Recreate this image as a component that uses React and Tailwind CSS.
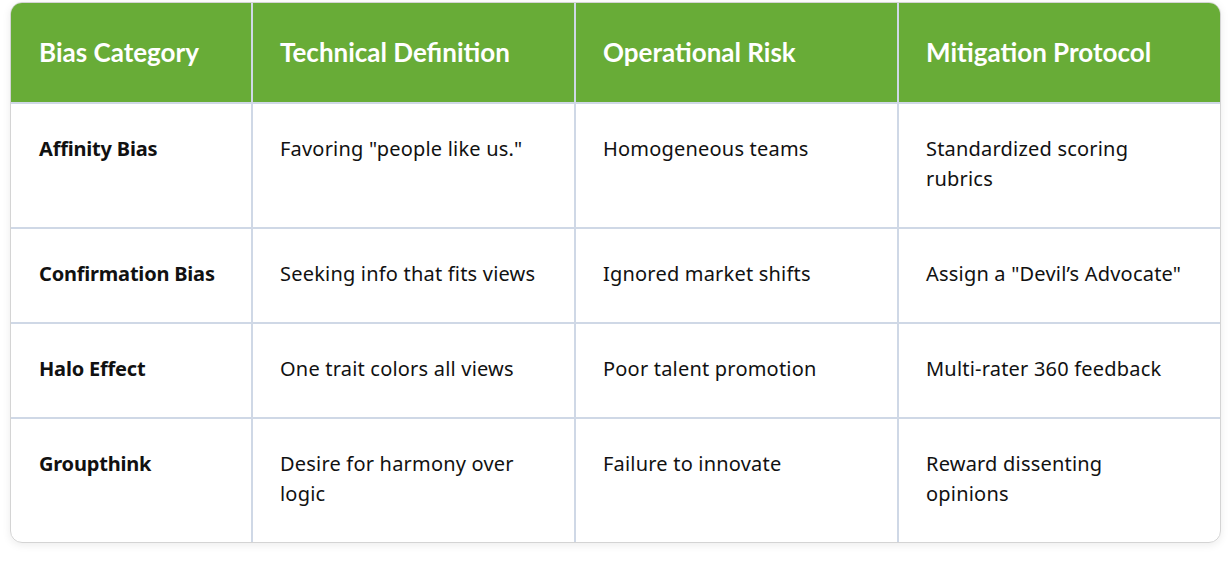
export default function App() {
  const rows = [
    ["Affinity Bias", 'Favoring "people like us."', "Homogeneous teams", "Standardized scoring rubrics"],
    ["Confirmation Bias", "Seeking info that fits views", "Ignored market shifts", 'Assign a "Devil\u2019s Advocate"'],
    ["Halo Effect", "One trait colors all views", "Poor talent promotion", "Multi-rater 360 feedback"],
    ["Groupthink", "Desire for harmony over logic", "Failure to innovate", "Reward dissenting opinions"],
  ];
  const heads = ["Bias Category", "Technical Definition", "Operational Risk", "Mitigation Protocol"];
  const cols = "grid grid-cols-[240px_323px_323px_1fr]";
  return (
    <div className="w-[1232px] h-[563px] bg-white pt-[2px] pl-[10px]">
      <div className="w-[1211px] rounded-[12px] border border-[#d4d4d4] overflow-hidden shadow-[0_2px_8px_rgba(0,0,0,0.08)]">
        <div className={`${cols} bg-[#68ac37] text-white`} style={{ fontFamily: "Lato, 'Noto Sans', sans-serif" }}>
          {heads.map((h, i) => (
            <div key={i} className={`h-[99px] flex items-center px-[28px] text-[26px] font-bold ${i > 0 ? "border-l-2 border-[#cfd8e6] pl-[27px]" : ""}`}>
              {h}
            </div>
          ))}
        </div>
        {rows.map((r, ri) => (
          <div key={ri} className={`${cols} border-t-2 border-[#cfd8e6]`} style={{ fontFamily: "'Noto Sans', sans-serif" }}>
            {r.map((c, ci) => (
              <div key={ci} className={`pt-[30px] pb-[33px] text-[20px] leading-[30px] text-[#111] ${ci === 0 ? "font-bold tracking-[-0.2px] pl-[28px] pr-[8px]" : "tracking-[0.2px] border-l-2 border-[#cfd8e6] pl-[27px] pr-[33px]"}`}>
                {c}
              </div>
            ))}
          </div>
        ))}
      </div>
    </div>
  );
}
